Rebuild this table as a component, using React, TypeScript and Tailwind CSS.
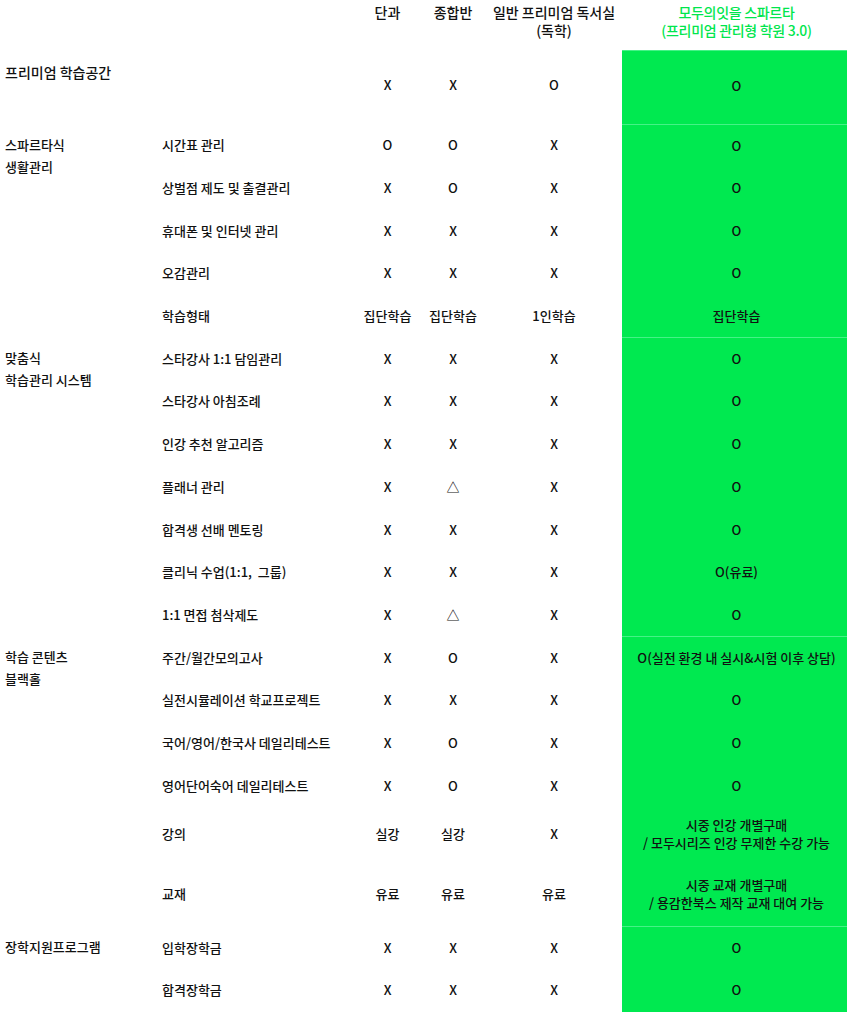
import React from 'react';

type Row = { item: string; a: string; b: string; c: string; d: string[]; tall?: boolean };
type Group = { label: string[]; rows: Row[]; first?: boolean };

const groups: Group[] = [
  {
    label: ['프리미엄 학습공간'],
    first: true,
    rows: [{ item: '', a: 'X', b: 'X', c: 'O', d: ['O'] }],
  },
  {
    label: ['스파르타식', '생활관리'],
    rows: [
      { item: '시간표 관리', a: 'O', b: 'O', c: 'X', d: ['O'] },
      { item: '상벌점 제도 및 출결관리', a: 'X', b: 'O', c: 'X', d: ['O'] },
      { item: '휴대폰 및 인터넷 관리', a: 'X', b: 'X', c: 'X', d: ['O'] },
      { item: '오감관리', a: 'X', b: 'X', c: 'X', d: ['O'] },
      { item: '학습형태', a: '집단학습', b: '집단학습', c: '1인학습', d: ['집단학습'] },
    ],
  },
  {
    label: ['맞춤식', '학습관리 시스템'],
    rows: [
      { item: '스타강사 1:1 담임관리', a: 'X', b: 'X', c: 'X', d: ['O'] },
      { item: '스타강사 아침조례', a: 'X', b: 'X', c: 'X', d: ['O'] },
      { item: '인강 추천 알고리즘', a: 'X', b: 'X', c: 'X', d: ['O'] },
      { item: '플래너 관리', a: 'X', b: '△', c: 'X', d: ['O'] },
      { item: '합격생 선배 멘토링', a: 'X', b: 'X', c: 'X', d: ['O'] },
      { item: '클리닉 수업(1:1,\u00a0 그룹)', a: 'X', b: 'X', c: 'X', d: ['O(유료)'] },
      { item: '1:1 면접 첨삭제도', a: 'X', b: '△', c: 'X', d: ['O'] },
    ],
  },
  {
    label: ['학습 콘텐츠', '블랙홀'],
    rows: [
      { item: '주간/월간모의고사', a: 'X', b: 'O', c: 'X', d: ['O(실전 환경 내 실시&시험 이후 상담)'] },
      { item: '실전시뮬레이션 학교프로젝트', a: 'X', b: 'X', c: 'X', d: ['O'] },
      { item: '국어/영어/한국사 데일리테스트', a: 'X', b: 'O', c: 'X', d: ['O'] },
      { item: '영어단어숙어 데일리테스트', a: 'X', b: 'O', c: 'X', d: ['O'] },
      { item: '강의', a: '실강', b: '실강', c: 'X', d: ['시중 인강 개별구매', '/ 모두시리즈 인강 무제한 수강 가능'], tall: true },
      { item: '교재', a: '유료', b: '유료', c: '유료', d: ['시중 교재 개별구매', '/ 용감한북스 제작 교재 대여 가능'], tall: true },
    ],
  },
  {
    label: ['장학지원프로그램'],
    rows: [
      { item: '입학장학금', a: 'X', b: 'X', c: 'X', d: ['O'] },
      { item: '합격장학금', a: 'X', b: 'X', c: 'X', d: ['O'] },
    ],
  },
];

function RowLine({ row, first, top }: { row: Row; first?: boolean; top: boolean }) {
  const h = first ? 'h-[74px]' : row.tall ? 'h-[59.6px]' : 'h-[42.7px]';
  const pad = first ? 'pb-[4px]' : row.tall ? 'pb-[5px]' : '';
  return (
    <div className={`grid grid-cols-[200px_65px_66px_136px_225px] items-stretch ${h}`}>
      <div className={`flex items-center pl-[7px] ${pad}`}>{row.item}</div>
      <div className={`flex items-center justify-center ${pad}`}>{row.a}</div>
      <div className={`flex items-center justify-center ${pad}`}>{row.b}</div>
      <div className={`flex items-center justify-center ${pad}`}>{row.c}</div>
      <div
        className={`flex flex-col items-center justify-center bg-[#00e950] pl-[4px] text-center ${pad} ${
          row.tall ? 'leading-[18px]' : ''
        } ${top ? 'border-t border-[#45f287]' : ''}`}
      >
        {row.d.map((t) => (
          <span key={t}>{t}</span>
        ))}
      </div>
    </div>
  );
}

export default function App() {
  return (
    <div
      className="h-[1016px] w-[850px] overflow-hidden bg-white text-[13px] font-medium leading-[22px] text-[#111]"
      style={{ fontFamily: '"Noto Sans CJK KR", "Noto Sans", sans-serif' }}
    >
      {/* Header */}
      <div className="grid h-[50px] grid-cols-[155px_200px_65px_66px_136px_225px] pt-[3px] text-[14px] leading-[18px]">
        <div />
        <div />
        <div className="text-center">단과</div>
        <div className="text-center">종합반</div>
        <div className="text-center">
          일반 프리미엄 독서실
          <br />
          (독학)
        </div>
        <div className="pl-[4px] text-center tracking-[-0.3px] text-[#00e64d]">
          모두의잇을 스파르타
          <br />
          (프리미엄 관리형 학원 3.0)
        </div>
      </div>

      {groups.map((g) => (
        <div key={g.label.join()} className="flex">
          <div className={`w-[155px] shrink-0 pl-[5px] ${g.first ? 'pt-[11px] text-[14px]' : 'pt-[10px]'}`}>
            {g.label.map((l) => (
              <div key={l}>{l}</div>
            ))}
          </div>
          <div className="flex flex-col">
            {g.rows.map((r, i) => (
              <RowLine key={r.item + i} row={r} first={g.first} top={i === 0} />
            ))}
          </div>
        </div>
      ))}
    </div>
  );
}
